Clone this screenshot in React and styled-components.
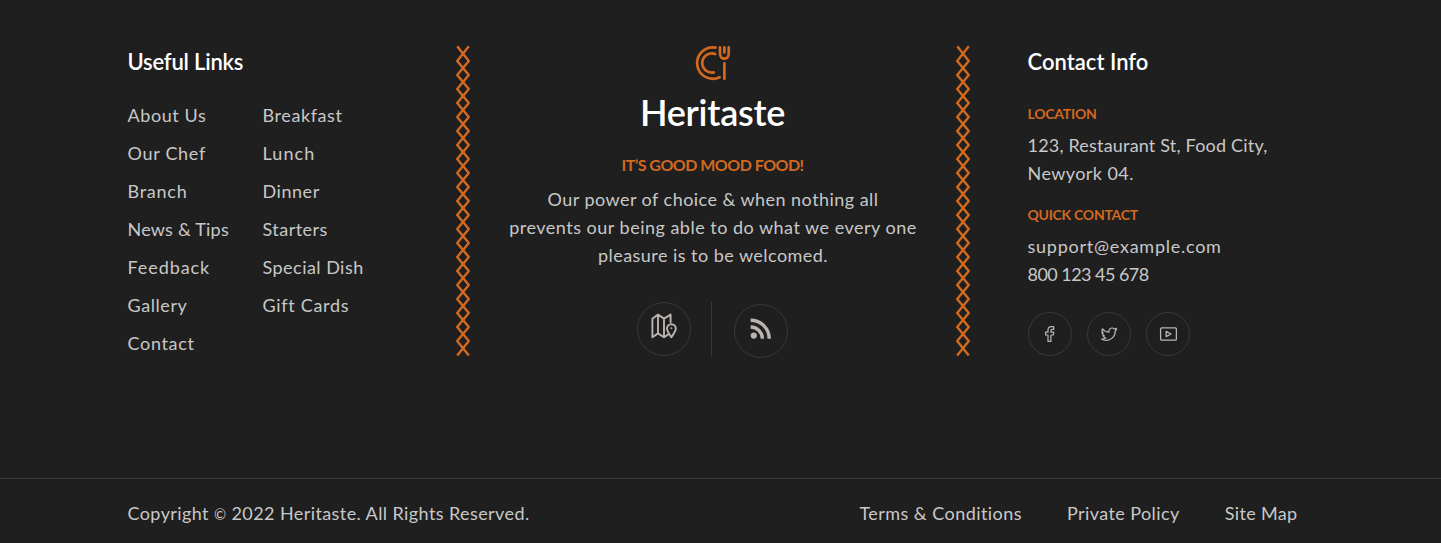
import React from 'react';
import styled, { createGlobalStyle } from 'styled-components';

const GlobalStyle = createGlobalStyle`
  * { box-sizing: border-box; }
  body {
    margin: 0;
    background: #1f1f1f;
    color: #c8c8c8;
    font: 400 18px/28px Lato, "Liberation Sans", sans-serif;
  }
  h2, h3, h4, p, ul { margin: 0; padding: 0; }
  ul { list-style: none; }
  a { color: inherit; text-decoration: none; }
`;

const Footer = styled.footer`
  display: flex;
  flex-direction: column;
  height: 543px;
  background: #1f1f1f;
  overflow: hidden;
`;

const Main = styled.div`
  display: grid;
  grid-template-columns: 328.5px 14px 486px 14px 1fr;
  align-items: start;
  height: 478px;
  padding: 46px 0 0 127.5px;
`;

const Heading = styled.h3`
  height: 55px;
  padding-top: 1px;
  color: #fff;
  font-size: 22px;
  font-weight: 600;
  line-height: 29px;
  letter-spacing: ${(p) => p.$track}px;
`;

const Links = styled.div`
  display: grid;
  grid-template-columns: 135px 1fr;
`;

const LinkList = styled.ul`
  display: flex;
  flex-direction: column;
  gap: 10px;
`;

const Text = styled.span`
  display: block;
  white-space: nowrap;
  letter-spacing: ${(p) => p.$track}px;
`;

const Mark = styled.span`
  font-size: 14.5px;
`;

const Brand = styled.section`
  display: flex;
  flex-direction: column;
  align-items: center;
  text-align: center;
`;

const BrandName = styled.h2`
  margin: 10px 1px 0 0;
  color: #fff;
  font-size: 36px;
  font-weight: 600;
  line-height: 44px;
  letter-spacing: -0.25px;
`;

const Tagline = styled.h4`
  margin: 21px 1px 10px 0;
  color: #d2691f;
  font-size: 16px;
  font-weight: 700;
  line-height: 20px;
  letter-spacing: -0.52px;
`;

const Actions = styled.div`
  display: flex;
  align-items: flex-start;
  margin: 33px 2px 0 0;
`;

const Divider = styled.span`
  width: 1px;
  height: 54px;
  margin: 0 22px 0 20px;
  background: #383838;
`;

const Round = styled.a`
  display: flex;
  align-items: center;
  justify-content: center;
  width: ${(p) => p.$size}px;
  height: ${(p) => p.$size}px;
  margin-top: ${(p) => p.$drop || 0}px;
  padding-bottom: ${(p) => p.$raise || 0}px;
  border: 1px solid #383838;
  border-radius: 50%;
  color: #b9b4b0;
`;

const Contact = styled.section`
  padding-left: 57.5px;
`;

const Label = styled.h4`
  margin: ${(p) => p.$above}px 0 7px;
  color: #d2691f;
  font-size: 14px;
  font-weight: 700;
  line-height: 21px;
  letter-spacing: ${(p) => p.$track}px;
`;

const Socials = styled.div`
  display: flex;
  gap: 15px;
  margin: 24px 0 0 0.5px;
`;

const Bottom = styled.div`
  display: flex;
  justify-content: space-between;
  height: 65px;
  padding: 20px 143.5px 0 127.5px;
  border-top: 1px solid #383838;
`;

const Legal = styled.nav`
  display: flex;
  gap: 45px;
`;

const Icon = styled.svg`
  display: block;
  overflow: visible;
  fill: none;
  stroke: currentColor;
  stroke-linecap: ${(p) => p.$cap || 'round'};
  stroke-linejoin: round;
`;

const Stitch = () => {
  let a = 'M1.2 .3';
  let b = 'M12.8 .3';
  for (let i = 0; i < 22; i += 1) {
    const y = i === 21 ? 309.6 : 14 * i + 15;
    a += `L${i % 2 ? 1.2 : 12.8} ${y}`;
    b += `L${i % 2 ? 12.8 : 1.2} ${y}`;
  }
  return (
    <Icon width="14" height="310" viewBox="0 0 14 310" color="#d2691f" strokeWidth="2.4" $cap="butt">
      <path d={a} />
      <path d={b} />
    </Icon>
  );
};

const Logo = () => (
  <Icon width="34" height="34" viewBox="0 0 34 34" color="#d2691f" strokeWidth="2.7">
    <path d="M19.6 1.6A15.7 15.7 0 1 0 23.6 31.2" />
    <path d="M19.2 8A9.6 9.6 0 1 0 17.8 26.4" />
    <path d="M24 1.3V7.8C24 14.3 32.7 14.3 32.7 7.8V1.3M28.4 1.3V6.5" />
    <path d="M28.4 17.4V32.7" />
  </Icon>
);

const first = [['About Us', 0.59], ['Our Chef', 0.7], ['Branch', 0.75], ['News & Tips', 0.22], ['Feedback', 0.92], ['Gallery', 0.57], ['Contact', 0.67]];
const second = [['Breakfast', 0.6], ['Lunch', 1.1], ['Dinner', 0.55], ['Starters', 0.47], ['Special Dish', 0.47], ['Gift Cards', 0.69]];
const legal = [['Terms & Conditions', 0.45], ['Private Policy', 0.41], ['Site Map', 0.35]];

const List = ({ items }) => (
  <LinkList>
    {items.map(([name, track]) => (
      <li key={name}><a href="#"><Text $track={track}>{name}</Text></a></li>
    ))}
  </LinkList>
);

export default function App() {
  return (
    <Footer>
      <GlobalStyle />
      <Main>
        <section>
          <Heading $track={-0.2}>Useful Links</Heading>
          <Links>
            <List items={first} />
            <List items={second} />
          </Links>
        </section>
        <Stitch />
        <Brand>
          <Logo />
          <BrandName>Heritaste</BrandName>
          <Tagline>IT’S GOOD MOOD FOOD!</Tagline>
          <p>
            <Text $track={0.46}>Our power of choice &amp; when nothing all</Text>
            <Text $track={0.49}>prevents our being able to do what we every one</Text>
            <Text $track={0.46}>pleasure is to be welcomed.</Text>
          </p>
          <Actions>
            <Round href="#" $size={54} $raise={6} aria-label="Map">
              <Icon width="26" height="26" viewBox="0 0 26 26" strokeWidth="1.9">
                <path d="M1.4 24.3V5.8L7 1.6L13 5.6L19.6 1.6V9.2M1.4 24.3L7 20.4L13 24.3L17 21.6M7 1.6V20.4M13 5.6V24.3" />
                <path d="M20.3 24.3C18.6 21.4 16 18.5 16 15.6A4.4 4.4 0 0 1 24.8 15.6C24.8 18.5 22 21.4 20.3 24.3Z" />
                <circle cx="20.4" cy="15.2" r=".4" strokeWidth="1.2" />
              </Icon>
            </Round>
            <Divider />
            <Round href="#" $size={54} $drop={2} $raise={5} aria-label="RSS">
              <Icon width="21" height="21" viewBox="0 0 21 21" strokeWidth="3.4" $cap="butt">
                <path d="M.6 2.2A18.4 18.4 0 0 1 19.2 20.8M.6 9A11.7 11.7 0 0 1 12.4 20.8" />
                <circle cx="3.8" cy="17.6" r="3.1" fill="currentColor" stroke="none" />
              </Icon>
            </Round>
          </Actions>
        </Brand>
        <Stitch />
        <Contact>
          <Heading $track={0.02}>Contact Info</Heading>
          <Label $above={2} $track={-0.22}>LOCATION</Label>
          <Text $track={0.19}>123, Restaurant St, Food City,</Text>
          <Text $track={0.42}>Newyork 04.</Text>
          <Label $above={17} $track={-0.26}>QUICK CONTACT</Label>
          <Text $track={0.75}>support@example.com</Text>
          <Text $track={-0.54}>800 123 45 678</Text>
          <Socials>
            <Round href="#" $size={44} aria-label="Facebook">
              <Icon width="16" height="16" viewBox="0 0 16 16" strokeWidth="1.2">
                <path d="M6 15.4V9H3.6V6.2H6V4C6 1.7 7.2.6 9.4.6H11.7V3.4H10C9.2 3.4 8.9 3.8 8.9 4.5V6.2H11.8L11.4 9H8.9V15.4Z" />
              </Icon>
            </Round>
            <Round href="#" $size={44} aria-label="Twitter">
              <Icon width="16" height="16" viewBox="0 0 16 16" strokeWidth="1.2">
                <path d="M.5 13.1C2.3 13.2 3.7 12.8 4.8 11.9C3.4 11.7 2.5 10.9 2.1 9.7H3.3C1.8 9.1 1 8 1 6.6L2.2 6.9C.9 5.7.7 4.2 1.4 2.8C3.2 4.9 5.4 6 8 6.1C7.5 3.7 9.1 2 11.1 2C12.1 2 12.8 2.4 13.4 3L15.4 2.3L14.6 3.9L15.6 3.7L14.1 5.4C14.3 10.8 9.7 14.4 5.1 14.4C3.4 14.4 1.8 14 .5 13.1Z" />
              </Icon>
            </Round>
            <Round href="#" $size={44} aria-label="YouTube">
              <Icon width="17" height="14" viewBox="0 0 17 14" strokeWidth="1.3">
                <rect x=".6" y=".8" width="15.8" height="12.4" rx="1.2" />
                <path d="M6.2 4.4V9.6L11 7Z" />
              </Icon>
            </Round>
          </Socials>
        </Contact>
      </Main>
      <Bottom>
        <Text $track={0.41}>Copyright <Mark>©</Mark> 2022 Heritaste. All Rights Reserved.</Text>
        <Legal>
          {legal.map(([name, track]) => (
            <a href="#" key={name}><Text $track={track}>{name}</Text></a>
          ))}
        </Legal>
      </Bottom>
    </Footer>
  );
}
